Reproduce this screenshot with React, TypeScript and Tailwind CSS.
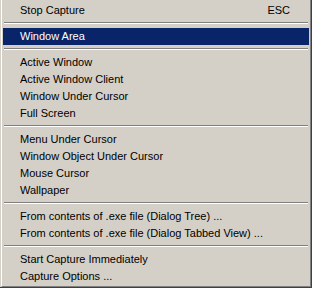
import React from 'react';

type MenuEntry =
  | { kind: 'item'; label: string; shortcut?: string; active?: boolean }
  | { kind: 'sep' };

const entries: MenuEntry[] = [
  { kind: 'item', label: 'Stop Capture', shortcut: 'ESC' },
  { kind: 'sep' },
  { kind: 'item', label: 'Window Area', active: true },
  { kind: 'sep' },
  { kind: 'item', label: 'Active Window' },
  { kind: 'item', label: 'Active Window Client' },
  { kind: 'item', label: 'Window Under Cursor' },
  { kind: 'item', label: 'Full Screen' },
  { kind: 'sep' },
  { kind: 'item', label: 'Menu Under Cursor' },
  { kind: 'item', label: 'Window Object Under Cursor' },
  { kind: 'item', label: 'Mouse Cursor' },
  { kind: 'item', label: 'Wallpaper' },
  { kind: 'sep' },
  { kind: 'item', label: 'From contents of .exe file (Dialog Tree) ...' },
  { kind: 'item', label: 'From contents of .exe file (Dialog Tabbed View) ...' },
  { kind: 'sep' },
  { kind: 'item', label: 'Start Capture Immediately' },
  { kind: 'item', label: 'Capture Options ...' },
];

const App: React.FC = () => {
  return (
    <div className="w-[312px] h-[288px] bg-[#d4d0c8] pl-px border-r border-b border-[#404040] font-['Liberation_Sans',Arial,sans-serif] text-[11px] text-black select-none">
      <div className="h-full border-l border-l-white border-r border-b border-r-[#808080] border-b-[#808080] pt-[2px] pb-px px-px">
        {entries.map((entry, i) =>
          entry.kind === 'sep' ? (
            <div key={i} className="mx-px mt-[3px] mb-[4px] h-[2px] border-t border-t-[#808080] border-b border-b-white" />
          ) : (
            <div
              key={i}
              className={`h-[17px] flex items-center justify-between pl-[17px] pr-[19px] leading-none ${
                entry.active ? 'bg-[#0a246a] text-white' : ''
              }`}
            >
              <span className="whitespace-nowrap">{entry.label}</span>
              {entry.shortcut && <span>{entry.shortcut}</span>}
            </div>
          )
        )}
      </div>
    </div>
  );
};

export default App;
